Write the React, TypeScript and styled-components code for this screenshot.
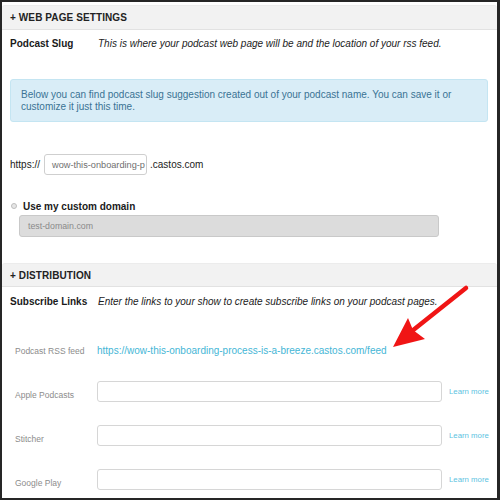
import React from "react";
import styled, { createGlobalStyle } from "styled-components";

const Global = createGlobalStyle`
  html, body { margin: 0; padding: 0; background: #fff; }
  body { font-family: "Liberation Sans", Arial, Helvetica, sans-serif; }
`;

const Frame = styled.div`
  position: relative;
  box-sizing: border-box;
  width: 500px;
  height: 500px;
  border-style: solid;
  border-color: #262626;
  border-width: 2px 3px 2px 2px;
  background: #fff;
  overflow: hidden;
  color: #1f1f1f;
`;

const SectionHeader = styled.div<{ $top: number; $h: number }>`
  box-sizing: border-box;
  margin-top: ${(p) => p.$top}px;
  height: ${(p) => p.$h}px;
  display: flex;
  align-items: center;
  padding-left: 8px;
  background: #f2f2f2;
  border-top: 1px solid #ececec;
  border-bottom: 1px solid #e2e2e2;
  border-radius: 3px 3px 0 0;
  font-size: 10px;
  font-weight: 700;
  letter-spacing: 0.1px;
  color: #222;
`;

const Content = styled.div`
  padding: 0 9px 0 8px;
`;

const IntroRow = styled.div<{ $top: number }>`
  margin-top: ${(p) => p.$top}px;
  display: grid;
  grid-template-columns: 88px 1fr;
  align-items: center;
  line-height: 14px;
  font-size: 10px;
`;

const IntroTitle = styled.span`
  font-weight: 700;
  color: #1a1a1a;
`;

const IntroText = styled.span`
  font-style: italic;
  color: #222;
`;

const InfoBox = styled.div<{ $top: number }>`
  margin-top: ${(p) => p.$top}px;
  box-sizing: border-box;
  height: 43px;
  padding: 9px 10px 0 10px;
  background: #d9edf7;
  border: 1px solid #c4e5f2;
  border-radius: 3px;
  color: #3a7394;
  font-size: 10px;
  line-height: 12px;
`;

const UrlRow = styled.div<{ $top: number }>`
  margin-top: ${(p) => p.$top}px;
  display: flex;
  align-items: center;
  font-size: 10px;
  color: #222;
`;

const SlugInput = styled.div`
  box-sizing: border-box;
  width: 103px;
  height: 21px;
  margin: 0 3px 0 4px;
  padding-left: 7px;
  display: flex;
  align-items: center;
  border: 1px solid #cfcfcf;
  border-radius: 3px;
  font-size: 9.2px;
  color: #6f6f6f;
  white-space: nowrap;
`;

const RadioRow = styled.div<{ $top: number }>`
  margin-top: ${(p) => p.$top}px;
  display: flex;
  align-items: center;
  height: 14px;
  font-size: 10px;
  font-weight: 700;
  color: #1a1a1a;
`;

const Radio = styled.span`
  box-sizing: border-box;
  width: 6px;
  height: 6px;
  margin: 0 6px 0 1px;
  border-radius: 50%;
  border: 1px solid #bdbdbd;
  background: #e6e6e6;
`;

const DisabledInput = styled.div`
  box-sizing: border-box;
  margin: 2px 0 0 9px;
  width: 420px;
  height: 22px;
  padding-left: 8px;
  display: flex;
  align-items: center;
  background: #dcdcdc;
  border: 1px solid #c9c9c9;
  border-radius: 3px;
  font-size: 8.8px;
  color: #8a8a8a;
`;

const FieldRow = styled.div<{ $top: number }>`
  margin-top: ${(p) => p.$top}px;
  display: grid;
  grid-template-columns: 87px 345px max-content;
  align-items: center;
`;

const FieldLabel = styled.span<{ $low?: boolean }>`
  padding-left: 5px;
  font-size: 8.5px;
  color: #8c8c8c;
  white-space: nowrap;
  align-self: ${(p) => (p.$low ? "end" : "center")};
  padding-bottom: ${(p) => (p.$low ? "2px" : "0")};
`;

const FeedLink = styled.span`
  grid-column: 2 / span 2;
  font-size: 10px;
  color: #45b6d6;
  line-height: 14px;
  white-space: nowrap;
`;

const TextBox = styled.div`
  box-sizing: border-box;
  height: 21px;
  border: 1px solid #d6d6d6;
  border-radius: 3px;
  background: #fff;
`;

const LearnMore = styled.span`
  margin-left: 7px;
  font-size: 7.8px;
  color: #5cc3df;
  white-space: nowrap;
`;

const ArrowOverlay = styled.svg`
  position: absolute;
  left: -2px;
  top: -2px;
  width: 500px;
  height: 500px;
  pointer-events: none;
`;

const subscribeFields = ["Apple Podcasts", "Stitcher", "Google Play"];

export default function App() {
  return (
    <>
      <Global />
      <Frame>
        <SectionHeader $top={3} $h={25}>+ WEB PAGE SETTINGS</SectionHeader>
        <Content>
          <IntroRow $top={7}>
            <IntroTitle>Podcast Slug</IntroTitle>
            <IntroText>
              This is where your podcast web page will be and the location of your rss feed.
            </IntroText>
          </IntroRow>
          <InfoBox $top={28}>
            Below you can find podcast slug suggestion created out of your podcast name. You can save it or
            customize it just this time.
          </InfoBox>
          <UrlRow $top={32}>
            https://
            <SlugInput>wow-this-onboarding-p</SlugInput>
            .castos.com
          </UrlRow>
          <RadioRow $top={24}>
            <Radio />
            Use my custom domain
          </RadioRow>
          <DisabledInput>test-domain.com</DisabledInput>
        </Content>
        <SectionHeader $top={26} $h={24}>+ DISTRIBUTION</SectionHeader>
        <Content>
          <IntroRow $top={8}>
            <IntroTitle>Subscribe Links</IntroTitle>
            <IntroText>
              Enter the links to your show to create subscribe links on your podcast pages.
            </IntroText>
          </IntroRow>
          <FieldRow $top={35}>
            <FieldLabel>Podcast RSS feed</FieldLabel>
            <FeedLink>https://wow-this-onboarding-process-is-a-breeze.castos.com/feed</FeedLink>
          </FieldRow>
          {subscribeFields.map((name, i) => (
            <FieldRow key={name} $top={i === 0 ? 22.5 : 23}>
              <FieldLabel $low>{name}</FieldLabel>
              <TextBox />
              <LearnMore>Learn more</LearnMore>
            </FieldRow>
          ))}
        </Content>
        <ArrowOverlay viewBox="0 0 500 500">
          <line x1="466" y1="288" x2="412" y2="331" stroke="#f01515" strokeWidth="4.5" strokeLinecap="round" />
          <polygon points="393,347 408,318 413,330 425,339" fill="#f01515" />
        </ArrowOverlay>
      </Frame>
    </>
  );
}
